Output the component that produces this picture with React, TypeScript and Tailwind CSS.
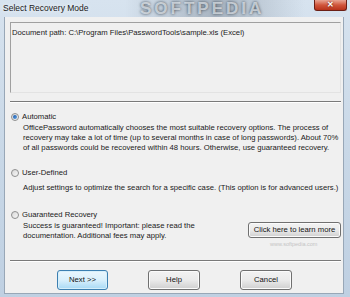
import React from "react";

function Radio({ checked }: { checked?: boolean }) {
  return (
    <span className="relative flex h-[8px] w-[8px] shrink-0 items-center justify-center rounded-full border border-[#8e8f8f] bg-gradient-to-br from-[#d8d8d8] to-[#f8f8f8]">
      {checked && (
        <span className="h-[4px] w-[4px] rounded-full bg-gradient-to-br from-[#1a56a8] to-[#5fa4e6]" />
      )}
    </span>
  );
}

function Btn({ children, def, className }: { children: React.ReactNode; def?: boolean; className?: string }) {
  return (
    <div
      className={
        "flex items-center justify-center whitespace-nowrap rounded-[3px] border bg-gradient-to-b text-[7.7px] leading-none text-[#111] " +
        (def
          ? "border-[#3c7fb1] from-[#eaf6fd] via-[#d9f0fc] to-[#a7d9f5] shadow-[inset_0_0_0_1px_#d6effb] "
          : "border-[#707070] from-[#f2f2f2] via-[#ebebeb] to-[#cfcfcf] shadow-[inset_0_0_0_1px_#fbfbfb] ") +
        (className ?? "")
      }
    >
      {children}
    </div>
  );
}

export default function App() {
  return (
    <div className="relative h-[297px] w-[350px] overflow-hidden bg-gradient-to-b from-[#d7e3ef] via-[#c9d8e7] to-[#bfd0e2] font-['Liberation_Sans',Arial,sans-serif]">
      {/* title bar */}
      <div className="relative flex h-[17px] items-center overflow-hidden pl-[3px]">
        <div className="absolute left-[125px] top-0 h-[17px] w-[180px] bg-gradient-to-r from-transparent via-[#8a96a3]/60 to-transparent" />
        <span className="absolute left-[140px] top-0 text-[17px] font-bold leading-[17px] tracking-[3px] text-[#e9eef3]/70 [text-shadow:0_0_3px_#3a4652]">
          SOFTPEDIA
        </span>
        <span className="relative text-[8.5px] leading-none text-[#1a1a1a] [text-shadow:0_0_4px_#ffffff]">
          Select Recovery Mode
        </span>
        <div className="absolute right-[3px] top-0 flex h-[11px] w-[33px] items-center justify-center rounded-b-[3px] border border-t-0 border-[#6b1f15] bg-gradient-to-b from-[#e8a493] via-[#d0553b] to-[#b8321a]">
          <span className="text-[8px] font-bold leading-none text-white [text-shadow:0_0_2px_#5a1005]">✕</span>
        </div>
      </div>

      {/* client */}
      <div className="relative ml-[4px] flex h-[277px] w-[340px] flex-col whitespace-nowrap border border-t-0 border-[#98a7b7] bg-[#f0f0f0] pl-[5px] pr-[2px] text-[7.7px] text-[#1a1a1a]">
        <div className="mt-[5px] h-[71px] w-[331px] border border-[#a0a0a0] border-b-[#e3e3e3] border-r-[#e3e3e3] bg-[#f0f0f0] px-[1px] pt-[5px] leading-[10px]">
          Document path: C:\Program Files\PasswordTools\sample.xls (Excel)
        </div>

        <div className="mt-[8px] h-[2px] w-[331px] border-t border-b border-t-[#7a7a7a] border-b-white" />

        <div className="mt-[9px] flex h-[10px] items-center gap-[3px] pl-[1px] leading-[10px]">
          <Radio checked />
          <span>Automatic</span>
        </div>
        <div className="mt-[1px] pl-[13px] leading-[10px]">
          <div>OfficePassword automatically chooses the most suitable recovery options. The process of</div>
          <div>recovery may take a lot of time (up to several months in case of long passwords). About 70%</div>
          <div>of all passwords could be recovered within 48 hours. Otherwise, use guaranteed recovery.</div>
        </div>

        <div className="mt-[15px] flex h-[10px] items-center gap-[3px] pl-[1px] leading-[10px]">
          <Radio />
          <span>User-Defined</span>
        </div>
        <div className="mt-[5px] pl-[13px] leading-[10px]">
          Adjust settings to optimize the search for a specific case. (This option is for advanced users.)
        </div>

        <div className="mt-[17px] flex h-[10px] items-center gap-[3px] pl-[1px] leading-[10px]">
          <Radio />
          <span>Guaranteed Recovery</span>
        </div>
        <div className="mt-[1px] flex w-[331px] items-start justify-between">
          <div className="pl-[13px] leading-[10px]">
            <div>Success is guaranteed! Important: please read the</div>
            <div>documentation. Additional fees may apply.</div>
          </div>
          <Btn className="mt-[1px] h-[16px] w-[93px]">Click here to learn more</Btn>
        </div>

        <div className="mt-[19px] h-[2px] w-[331px] border-t border-b border-t-[#7a7a7a] border-b-white" />

        <div className="mt-[8px] flex gap-[40px] pl-[47px]">
          <Btn def className="h-[20px] w-[51px]">Next &gt;&gt;</Btn>
          <Btn className="h-[20px] w-[52px]">Help</Btn>
          <Btn className="h-[20px] w-[52px]">Cancel</Btn>
        </div>

        <span className="pointer-events-none absolute left-[265px] top-[223px] text-[5.5px] text-[#c4c4c4]">
          www.softpedia.com
        </span>
      </div>
    </div>
  );
}
